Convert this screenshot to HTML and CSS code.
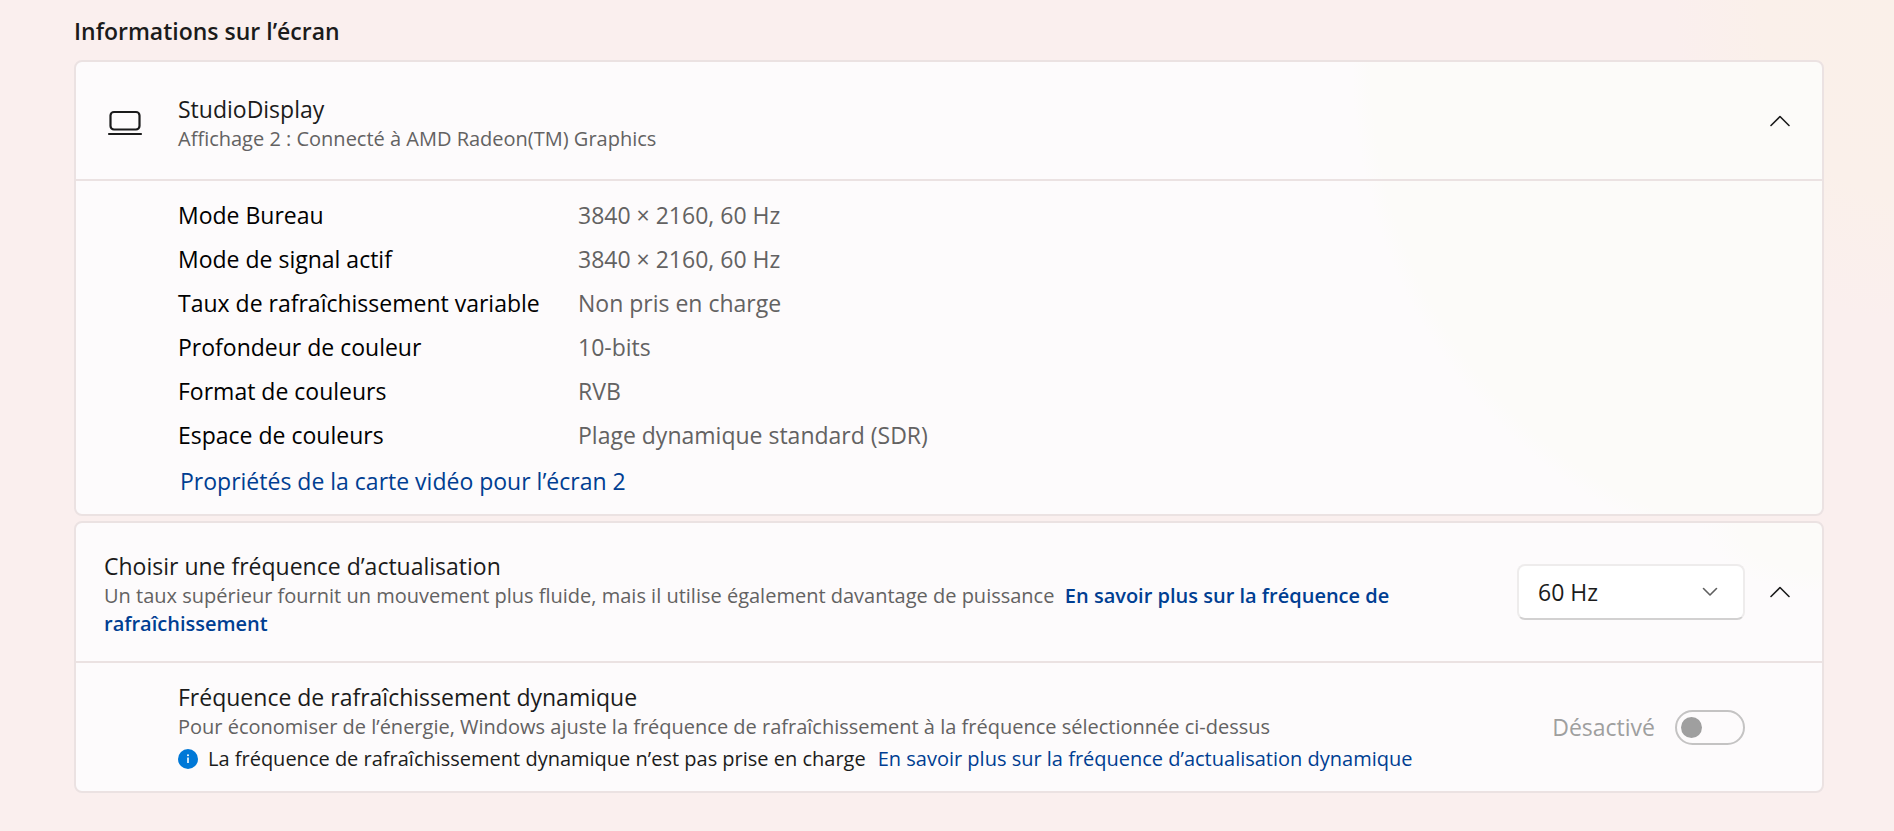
FILE: index.html
```html
<!DOCTYPE html>
<html lang="fr">
<head>
    <meta charset="UTF-8">
    <meta name="viewport" content="width=device-width, initial-scale=1.0">
    <title>Affichage avancé</title>
    <link rel="stylesheet" href="styles.css">
</head>
<body>
    <main class="page">
        <h1 class="page-title">Informations sur l’écran</h1>

        <section class="card card-display">
            <div class="card-header">
                <svg class="icon-display" viewBox="0 0 36 32" fill="none" stroke="#1b1b1b" stroke-width="2.2" stroke-linecap="round">
                    <rect x="3.5" y="7" width="29" height="17.5" rx="3.5"/>
                    <path d="M2 29H34"/>
                </svg>
                <div class="card-text">
                    <h2 class="title">StudioDisplay</h2>
                    <p class="subtitle">Affichage 2 : Connecté à AMD Radeon(TM) Graphics</p>
                </div>
                <button class="expander" type="button" aria-label="Réduire" aria-expanded="true">
                    <svg class="icon-up" viewBox="0 0 20 12" fill="none" stroke="#1b1b1b" stroke-width="1.6" stroke-linecap="round" stroke-linejoin="round">
                        <path d="M1 10.5L10 1.5L19 10.5"/>
                    </svg>
                </button>
            </div>
            <div class="details">
                <dl class="specs">
                    <dt>Mode Bureau</dt>
                    <dd>3840 × 2160, 60 Hz</dd>
                    <dt>Mode de signal actif</dt>
                    <dd>3840 × 2160, 60 Hz</dd>
                    <dt>Taux de rafraîchissement variable</dt>
                    <dd>Non pris en charge</dd>
                    <dt>Profondeur de couleur</dt>
                    <dd>10-bits</dd>
                    <dt>Format de couleurs</dt>
                    <dd>RVB</dd>
                    <dt>Espace de couleurs</dt>
                    <dd>Plage dynamique standard (SDR)</dd>
                </dl>
                <a class="adapter-link" href="#">Propriétés de la carte vidéo pour l’écran 2</a>
            </div>
        </section>

        <section class="card card-rate">
            <div class="card-header card-header-tall">
                <div class="card-text">
                    <h2 class="title"><label for="rate">Choisir une fréquence d’actualisation</label></h2>
                    <p class="subtitle">Un taux supérieur fournit un mouvement plus fluide, mais il utilise également davantage de puissance&nbsp; <a class="link-strong" href="#">En savoir plus sur la fréquence de rafraîchissement</a></p>
                </div>
                <div class="select-box">
                    <select class="select" id="rate">
                        <option>60 Hz</option>
                    </select>
                    <svg class="icon-down" viewBox="0 0 16 10" fill="none" stroke="#5f5f5f" stroke-width="1.6" stroke-linecap="round" stroke-linejoin="round">
                        <path d="M1.5 1.5L8 8L14.5 1.5"/>
                    </svg>
                </div>
                <button class="expander" type="button" aria-label="Réduire" aria-expanded="true">
                    <svg class="icon-up" viewBox="0 0 20 12" fill="none" stroke="#1b1b1b" stroke-width="1.6" stroke-linecap="round" stroke-linejoin="round">
                        <path d="M1 10.5L10 1.5L19 10.5"/>
                    </svg>
                </button>
            </div>
            <div class="sub-row">
                <div class="sub-text">
                    <h2 class="title">Fréquence de rafraîchissement dynamique</h2>
                    <p class="subtitle">Pour économiser de l’énergie, Windows ajuste la fréquence de rafraîchissement à la fréquence sélectionnée ci-dessus</p>
                    <div class="notice">
                        <svg class="icon-info" viewBox="0 0 20 20">
                            <circle cx="10" cy="10" r="10" fill="#0078d7"/>
                            <circle cx="10" cy="6.2" r="1" fill="#fff"/>
                            <path d="M10 8.5V14" stroke="#fff" stroke-width="1.6"/>
                        </svg>
                        <span>La fréquence de rafraîchissement dynamique n’est pas prise en charge</span>
                        <a class="link" href="#">En savoir plus sur la fréquence d’actualisation dynamique</a>
                    </div>
                </div>
                <label class="toggle">
                    <span>Désactivé</span>
                    <input class="switch" type="checkbox" role="switch" disabled>
                </label>
            </div>
        </section>
    </main>
</body>
</html>
```
FILE: styles.css
```css
* {
    box-sizing: border-box;
    margin: 0;
    padding: 0;
}
body {
    min-height: 100vh;
    background: radial-gradient(ellipse 220px 320px at 100% 0, #faf0e9 0, #faf0ea 60%, #faefee 100%);
    color: #1b1b1b;
    font-family: "Segoe UI", "Open Sans", "Noto Sans", sans-serif;
    font-size: 23px;
    line-height: 32px;
}
a {
    color: #003e92;
    text-decoration: none;
}
.page {
    padding: 15px 70px 32px 74px;
}
.page-title {
    margin-bottom: 13px;
    font-size: 23px;
    font-weight: 600;
}

.card {
    margin-bottom: 5px;
    border: 2px solid #ebe2e2;
    border-radius: 8px;
    background: #fdfbfc;
}
.card-display {
    background: radial-gradient(ellipse 470px 500px at 100% 0, #fcfbf9 96%, #fdfbfc 100%);
}
.card-rate {
    background: radial-gradient(ellipse 120px 70px at 100% 0, #fcfbf9 70%, #fdfbfc 100%);
}
.card-header {
    display: flex;
    align-items: center;
    min-height: 119px;
    padding: 0 20px 0 31px;
    border-bottom: 2px solid #ebe2e2;
}
.card-header-tall {
    min-height: 140px;
    padding-left: 28px;
}
.card-text {
    flex: 1;
    padding-top: 4px;
}
.title {
    font-size: 23px;
    font-weight: 400;
    line-height: 32px;
}
.subtitle {
    color: #636262;
    font-size: 20px;
    line-height: 28px;
}
.link-strong {
    font-weight: 600;
}
.icon-display {
    width: 36px;
    height: 32px;
    margin-right: 35px;
}
.expander {
    display: flex;
    align-items: center;
    justify-content: center;
    width: 44px;
    height: 44px;
    border: 0;
    background: none;
}
.icon-up {
    width: 20px;
    height: 12px;
}

.details {
    padding: 12px 32px 9px 102px;
}
.specs {
    display: grid;
    grid-template-columns: 400px 1fr;
    line-height: 44px;
}
.specs dt {
    color: #000;
}
.specs dd {
    color: #636262;
}
.adapter-link {
    display: block;
    padding: 8px 2px;
}

.select-box {
    display: grid;
    align-items: center;
    width: 228px;
    margin: 0 13px 0 80px;
}
.select {
    grid-area: 1 / 1;
    width: 100%;
    height: 56px;
    padding: 0 19px;
    border: 2px solid #eeecec;
    border-bottom-color: #d2d1d1;
    border-radius: 8px;
    background: #fff;
    color: #1b1b1b;
    font: inherit;
    appearance: none;
}
.icon-down {
    grid-area: 1 / 1;
    justify-self: end;
    width: 16px;
    height: 10px;
    margin-right: 27px;
    pointer-events: none;
}

.sub-row {
    display: flex;
    align-items: center;
    min-height: 128px;
    padding: 0 77px 0 102px;
}
.sub-text {
    flex: 1;
}
.notice {
    display: flex;
    align-items: center;
    margin-top: 4px;
    font-size: 20px;
    line-height: 28px;
}
.icon-info {
    width: 20px;
    height: 20px;
    margin-right: 10px;
}
.notice .link {
    margin-left: 12px;
}
.toggle {
    display: flex;
    align-items: center;
    gap: 20px;
    color: #9f9f9f;
}
.switch {
    display: flex;
    align-items: center;
    width: 70px;
    height: 35px;
    padding: 0 4px;
    border: 2px solid #c4c3c3;
    border-radius: 18px;
    appearance: none;
}
.switch::before {
    content: "";
    width: 21px;
    height: 21px;
    border-radius: 50%;
    background: #9f9f9f;
}
```
